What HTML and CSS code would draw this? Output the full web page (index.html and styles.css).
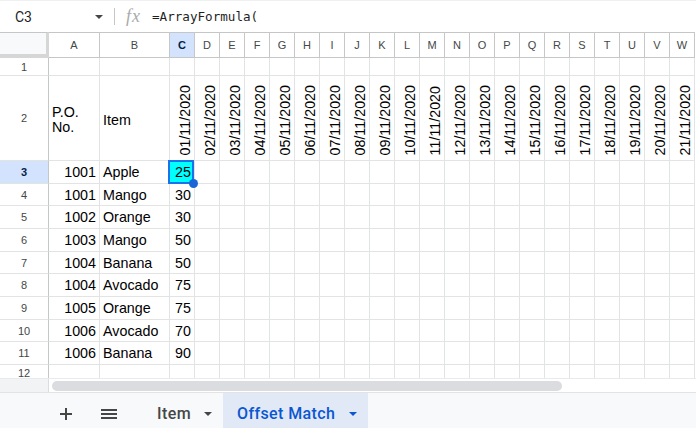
FILE: index.html
```html
<html><head>
    <title>Offset Match</title>
    <link rel="stylesheet" href="styles.css">
</head>
<body>
    <div class="toolbar">
        <div class="namebox">C3<span class="caret"></span></div>
        <div class="sep"></div>
        <div class="fx">fx</div>
        <div class="formula">=ArrayFormula(</div>
    </div>

    <div class="sheet">
        <div class="grid">
            <!-- column headers -->
            <div class="ch corner"></div>
            <div class="ch">A</div><div class="ch">B</div><div class="ch selh">C</div><div class="ch">D</div><div class="ch">E</div><div class="ch">F</div>
            <div class="ch">G</div><div class="ch">H</div><div class="ch">I</div><div class="ch">J</div><div class="ch">K</div><div class="ch">L</div>
            <div class="ch">M</div><div class="ch">N</div><div class="ch">O</div><div class="ch">P</div><div class="ch">Q</div><div class="ch">R</div>
            <div class="ch">S</div><div class="ch">T</div><div class="ch">U</div><div class="ch">V</div><div class="ch">W</div>

            <!-- row 1 -->
            <div class="rh">1</div>
            <div></div><div></div><div></div><div></div><div></div><div></div><div></div><div></div><div></div><div></div><div></div><div></div>
            <div></div><div></div><div></div><div></div><div></div><div></div><div></div><div></div><div></div><div></div><div></div>

            <!-- row 2 -->
            <div class="rh">2</div>
            <div class="r2 wrap">P.O. No.</div>
            <div class="r2">Item</div>
            <div class="d"><span>01/11/2020</span></div><div class="d"><span>02/11/2020</span></div><div class="d"><span>03/11/2020</span></div>
            <div class="d"><span>04/11/2020</span></div><div class="d"><span>05/11/2020</span></div><div class="d"><span>06/11/2020</span></div>
            <div class="d"><span>07/11/2020</span></div><div class="d"><span>08/11/2020</span></div><div class="d"><span>09/11/2020</span></div>
            <div class="d"><span>10/11/2020</span></div><div class="d"><span>11/11/2020</span></div><div class="d"><span>12/11/2020</span></div>
            <div class="d"><span>13/11/2020</span></div><div class="d"><span>14/11/2020</span></div><div class="d"><span>15/11/2020</span></div>
            <div class="d"><span>16/11/2020</span></div><div class="d"><span>17/11/2020</span></div><div class="d"><span>18/11/2020</span></div>
            <div class="d"><span>19/11/2020</span></div><div class="d"><span>20/11/2020</span></div><div class="d"><span>21/11/2020</span></div>

            <!-- row 3 -->
            <div class="rh selh">3</div>
            <div class="n">1001</div><div>Apple</div>
            <div class="n cur">25<span class="handle"></span></div>
            <div></div><div></div><div></div><div></div><div></div><div></div><div></div><div></div><div></div><div></div>
            <div></div><div></div><div></div><div></div><div></div><div></div><div></div><div></div><div></div><div></div>

            <!-- row 4 -->
            <div class="rh">4</div>
            <div class="n">1001</div><div>Mango</div><div class="n">30</div>
            <div></div><div></div><div></div><div></div><div></div><div></div><div></div><div></div><div></div><div></div>
            <div></div><div></div><div></div><div></div><div></div><div></div><div></div><div></div><div></div><div></div>

            <!-- row 5 -->
            <div class="rh">5</div>
            <div class="n">1002</div><div>Orange</div><div class="n">30</div>
            <div></div><div></div><div></div><div></div><div></div><div></div><div></div><div></div><div></div><div></div>
            <div></div><div></div><div></div><div></div><div></div><div></div><div></div><div></div><div></div><div></div>

            <!-- row 6 -->
            <div class="rh">6</div>
            <div class="n">1003</div><div>Mango</div><div class="n">50</div>
            <div></div><div></div><div></div><div></div><div></div><div></div><div></div><div></div><div></div><div></div>
            <div></div><div></div><div></div><div></div><div></div><div></div><div></div><div></div><div></div><div></div>

            <!-- row 7 -->
            <div class="rh">7</div>
            <div class="n">1004</div><div>Banana</div><div class="n">50</div>
            <div></div><div></div><div></div><div></div><div></div><div></div><div></div><div></div><div></div><div></div>
            <div></div><div></div><div></div><div></div><div></div><div></div><div></div><div></div><div></div><div></div>

            <!-- row 8 -->
            <div class="rh">8</div>
            <div class="n">1004</div><div>Avocado</div><div class="n">75</div>
            <div></div><div></div><div></div><div></div><div></div><div></div><div></div><div></div><div></div><div></div>
            <div></div><div></div><div></div><div></div><div></div><div></div><div></div><div></div><div></div><div></div>

            <!-- row 9 -->
            <div class="rh">9</div>
            <div class="n">1005</div><div>Orange</div><div class="n">75</div>
            <div></div><div></div><div></div><div></div><div></div><div></div><div></div><div></div><div></div><div></div>
            <div></div><div></div><div></div><div></div><div></div><div></div><div></div><div></div><div></div><div></div>

            <!-- row 10 -->
            <div class="rh">10</div>
            <div class="n">1006</div><div>Avocado</div><div class="n">70</div>
            <div></div><div></div><div></div><div></div><div></div><div></div><div></div><div></div><div></div><div></div>
            <div></div><div></div><div></div><div></div><div></div><div></div><div></div><div></div><div></div><div></div>

            <!-- row 11 -->
            <div class="rh">11</div>
            <div class="n">1006</div><div>Banana</div><div class="n">90</div>
            <div></div><div></div><div></div><div></div><div></div><div></div><div></div><div></div><div></div><div></div>
            <div></div><div></div><div></div><div></div><div></div><div></div><div></div><div></div><div></div><div></div>

            <!-- row 12, cut by the scrollbar -->
            <div class="rh">12</div>
            <div></div><div></div><div></div><div></div><div></div><div></div><div></div><div></div><div></div><div></div><div></div><div></div>
            <div></div><div></div><div></div><div></div><div></div><div></div><div></div><div></div><div></div><div></div><div></div>
        </div>
    </div>

    <div class="hscroll">
        <div class="hs-corner"></div>
        <div class="track"><div class="thumb"></div></div>
    </div>

    <div class="tabbar">
        <svg class="plus" width="12" height="12" viewBox="0 0 12 12"><path d="M6 0v12M0 6h12" stroke="#444746" stroke-width="2"/></svg>
        <svg class="menu" width="16" height="10" viewBox="0 0 16 10"><path d="M0 1h16M0 5h16M0 9h16" stroke="#444746" stroke-width="2"/></svg>
        <div class="tab first">Item<span class="arrow"></span></div>
        <div class="tab active">Offset Match<span class="arrow"></span></div>
    </div>
</body></html>
```

FILE: styles.css
```css
body {margin: 0; width: 696px; height: 428px; overflow: hidden; background: #fff;
      font-family: "Liberation Sans", Arial, sans-serif; display: flex; flex-direction: column;}

/* formula bar */
.toolbar {height: 32px; box-sizing: border-box; border-top: 1px solid #eef0f1; display: flex; align-items: center;
          font-family: Roboto, sans-serif; color: #1f1f1f;}
.namebox {width: 107px; box-sizing: border-box; padding: 0 4px 0 15px; display: flex; align-items: center;
          justify-content: space-between; font-size: 14px;}
.caret {border-left: 4px solid transparent; border-right: 4px solid transparent; border-top: 4px solid #444746;}
.sep {width: 1px; height: 17px; background: #c4c7c5; margin-left: 7px;}
.fx {width: 26px; margin-left: 11px; font: italic 18px "Liberation Serif", serif; color: #a8abad; letter-spacing: 1px;}
.formula {font: 12.6px "DejaVu Sans Mono", monospace; color: #1f1f1f;}

/* grid */
.sheet {height: 346px; overflow: hidden;}
.grid {display: grid; grid-template-columns: 49px 51px 70px repeat(21, 25px);
       grid-template-rows: 26px 18px 85px 23px 22px 23px 23px 22px 23px 23px 22px 23px 16px;
       font-size: 14.3px; color: #000;}
.grid div {box-sizing: border-box; border-right: 1px solid #e2e3e3; border-bottom: 1px solid #e2e3e3;
           display: flex; align-items: center; padding: 0 3px; white-space: nowrap; overflow: hidden; line-height: 16px;}
.grid .ch {border-top: 1px solid #c4c7c5; border-right-color: #c7c7c7; border-bottom-color: #c4c7c5;
           justify-content: center; padding: 0; font-size: 11px; color: #444746;}
.grid .corner {background: #f8f9fa; border-right: 3px solid #d6d6d6; border-bottom: 4px solid #d6d6d6;}
.grid .rh {justify-content: center; padding: 0; font-size: 11px; color: #444746; border-right-color: #c4c7c5;}
.grid .selh {background: #d3e3fd; color: #041e49; font-weight: bold;}
.grid .n {justify-content: flex-end;}
.grid .r2 {padding-top: 3px;}
.grid .wrap {white-space: normal; line-height: 15px;}
.grid .d {align-items: flex-end; justify-content: flex-end; padding: 0 1px 5px 0;}
.grid .d span {writing-mode: vertical-rl; transform: rotate(180deg);}

/* current cell */
.grid .cur {background: #00ffff; position: relative; overflow: visible;}
.grid .cur::after {content: ""; position: absolute; left: -2px; top: -1px; right: 0; bottom: -1px; border: 2px solid #1a73e8;}
.handle {position: absolute; right: -4px; bottom: -5px; width: 9px; height: 9px; border-radius: 50%;
         background: #1b66d6; z-index: 2;}

/* scrollbar */
.hscroll {height: 14px; box-sizing: border-box; border-top: 1px solid #e8eaed; display: flex;}
.hs-corner {width: 49px; box-sizing: border-box; background: #f1f3f4; border-right: 1px solid #dadce0;}
.track {flex: 1; padding: 2px 0 0 3px;}
.thumb {width: 510px; height: 10px; border-radius: 5px; background: #dadce0;}

/* sheet tabs */
.tabbar {flex: 1; display: flex; padding-left: 60px; background: #f8f9fa; border-top: 1px solid #e3e3e3;
         font-family: Roboto, sans-serif;}
.plus, .menu {align-self: center; margin-top: 6px;}
.menu {margin-left: 29px;}
.tab {display: flex; align-items: center; gap: 13px; padding: 6px 11px 0 14px; font-size: 16px; font-weight: 500;
      color: #444746; letter-spacing: 0.4px;}
.tab.first {margin-left: 26px;}
.tab.active {background: #e1e9f7; color: #0b57d0; gap: 14px;}
.arrow {border-left: 4px solid transparent; border-right: 4px solid transparent; border-top: 4px solid currentColor;}
```
